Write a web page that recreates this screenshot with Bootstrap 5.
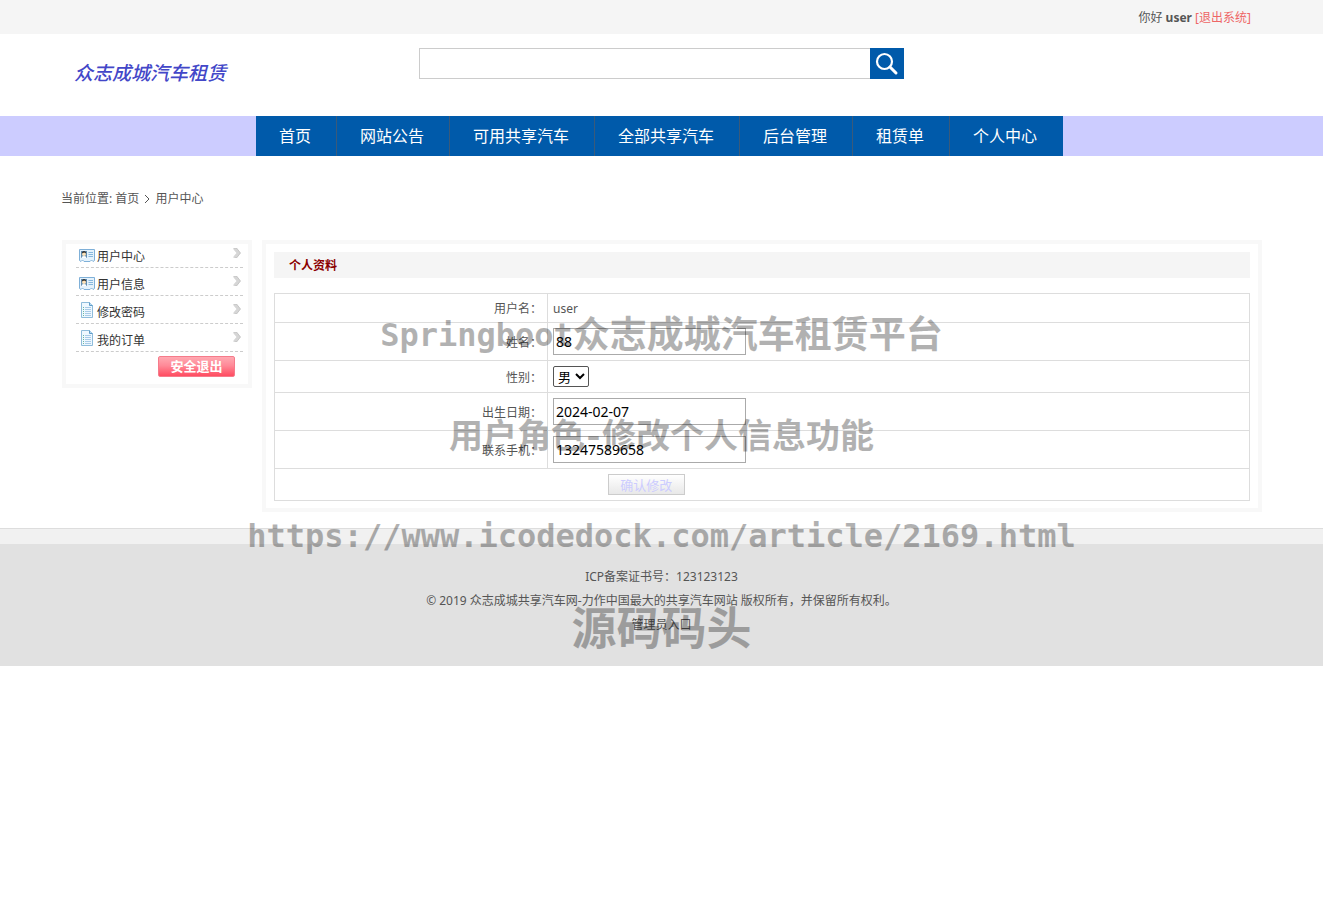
<!DOCTYPE html>
<html lang="zh-CN">
<head>
<meta charset="utf-8">
<meta name="viewport" content="width=device-width, initial-scale=1">
<title>用户中心</title>
<link rel="stylesheet" href="https://cdn.jsdelivr.net/npm/bootstrap@5.3.0/dist/css/bootstrap.min.css">
<style>
  body { font: 12px/18px "Noto Sans", "Noto Sans CJK SC", sans-serif; color: #555; background: #fff; }
  a { color: inherit; text-decoration: none; }
  .page-width { max-width: 1201px; margin: 0 auto; }
  .topbar { height: 34px; background: #f5f5f5; line-height: 36px; }
  .topbar .page-width { padding-right: 11px; }
  .topbar a { color: #e66; }
  .site-head { height: 82px; }
  .brand { width: 344px; padding: 27px 0 0 13px; font: italic 500 19px/22px "Noto Sans CJK SC", sans-serif; color: #4347c8; }
  .search-form { width: 485px; height: 31px; margin: 14px 0 0 14px; }
  .search-form input { border: 1px solid #ccc; border-right: 0; outline: 0; padding: 0 8px; font-size: 14px; min-width: 0; }
  .search-form button { width: 34px; border: 0; padding: 0; background: #005aaa; }
  .mainnav { background: #ccf; }
  .mainnav ul { margin: 0 0 0 195px; }
  .mainnav a { display: block; padding: 0 25px 0 23px; font-size: 16px; line-height: 40px; color: #fff; background: #005aaa; border-right: 1px solid #3a5a7a; }
  .mainnav li:last-child a { border-color: #005aaa; }
  .crumbs { padding-top: 34px; height: 84px; }
  .crumbs svg { margin: 0 1px; vertical-align: -1px; }
  .panel { border: 4px solid #f8f8f8; }
  .side { width: 190px; height: 148px; margin-left: 1px; padding: 0 5px 0 10px; }
  .side li { height: 28px; border-bottom: 1px dashed #ccc; color: #333; }
  .side li:first-child { height: 24px; }
  .side a { display: flex; height: 100%; align-items: flex-end; padding: 0 2px 1px 3px; }
  .side svg { flex: none; }
  .side .glyph { margin: 0 2px 4px 0; }
  .side .arrow { margin: 0 0 8px auto; }
  .side button { width: 77px; height: 21px; margin: 4px 8px 0 0; border: 1px solid #f67b8b; border-radius: 2px; padding: 0; font-size: 13px; font-weight: 700; line-height: 19px; color: #fff; background: linear-gradient(#ffa9b2, #ff8a98 45%, #ff4c61); }
  .profile { margin-left: 10px; padding: 8px 8px 7px; min-width: 0; }
  .profile h1 { height: 26px; margin: 0 0 15px; padding-left: 15px; font-size: 12px; font-weight: 700; line-height: 28px; color: #8b0000; background: #f5f5f5; }
  .info { width: 100%; border-collapse: collapse; table-layout: fixed; }
  .info th, .info td { border: 1px solid #ddd; padding: 5px; font-weight: 400; }
  .info th, .info .plain { padding: 6px 5px 4px; }
  .info th { width: 28%; text-align: right; }
  .info label { display: inline-block; }
  .info input, .info select { display: block; color: #000; font-size: 14px; background: transparent; }
  .info input { width: 193px; height: 27px; padding: 0 2px; border: 1px solid #aaa; outline: 0; }
  .info select { width: 36px; height: 21px; padding: 0; border: 1px solid #555; border-radius: 2px; font-size: 13px; }
  .info button { display: block; width: 77px; height: 21px; margin-left: 34%; border: 1px solid #ccc; padding: 0; font-size: 13px; line-height: 20px; color: #ccf; background: linear-gradient(#fff, #e8e8e8); }
  .site-foot { margin-top: 16px; border-top: 1px solid #ddd; background: #e1e1e1; line-height: 24px; text-align: center; }
  .foot-strip { height: 15px; background: #f1f1f1; }
  .foot-text { padding: 21px 0 29px; }
  .overlay { position: absolute; top: 306px; left: 0; right: 0; text-align: center; font-family: "Noto Sans Mono CJK SC", "Noto Sans CJK SC", sans-serif; font-weight: 700; color: #000; opacity: .3; pointer-events: none; white-space: nowrap; }
  .overlay p { margin: 0; line-height: 52px; height: 98px; }
  .overlay .wm-title { font-size: 37px; height: 102px; }
  .overlay .wm-topic { font-size: 34px; }
  .overlay .wm-link { line-height: 60px; }
  .overlay .wm-brand { font-size: 45px; line-height: 44px; }
  .overlay .mono { font-family: "DejaVu Sans Mono", monospace; font-size: 32px; }
  .overlay span.mono { vertical-align: 2px; line-height: 32px; }
</style>
</head>
<body class="position-relative">
<div class="topbar"><div class="page-width text-end">你好 <b>user</b> <a href="#">[退出系统]</a></div></div>
<header class="page-width site-head d-flex align-items-start">
  <a class="brand" href="#">众志成城汽车租赁</a>
  <form class="search-form d-flex">
    <input class="flex-grow-1" type="text" aria-label="搜索">
    <button type="button" aria-label="搜索"><svg width="34" height="31" viewBox="0 0 34 31" fill="none" stroke="#fff"><circle cx="14.500" cy="13.500" r="7.500" stroke-width="2.200"/><path d="M20 19l6 6" stroke-width="3" stroke-linecap="round"/></svg></button>
  </form>
</header>
<nav class="mainnav"><div class="page-width">
  <ul class="list-unstyled d-flex">
    <li><a href="#">首页</a></li><li><a href="#">网站公告</a></li><li><a href="#">可用共享汽车</a></li><li><a href="#">全部共享汽车</a></li><li><a href="#">后台管理</a></li><li><a href="#">租赁单</a></li><li><a href="#">个人中心</a></li>
  </ul></div></nav>
<svg class="d-none">
  <symbol id="card-icon" viewBox="0 0 16 13"><path d="M.5.5h15v11l-1.500 1-1.500-1.500-1.500 1.500h-6L3.500 11 2 12.500.5 11.500z" fill="#e4f2fc" stroke="#7fb0d8"/><path d="M2 2h6v7H2z" fill="#5f8cb0"/><circle cx="5" cy="5" r="2" fill="#ffe3b8"/><path d="M2.800 4.500q0-2.500 2.200-2.500t2.200 2.500l-2-1z" fill="#332a22"/><path d="M2.500 9q0-2 2.500-2t2.500 2z" fill="#fff"/><path d="M9.500 3.500h4.500M9.500 5.500h4.500M9.500 7.500h4.500" stroke="#87b8de"/></symbol>
  <symbol id="page-icon" viewBox="0 0 16 16"><path d="M2.500.5h8l3 3v12h-11z" fill="#eef8ff" stroke="#8fbcdb"/><path d="M10.500.5v3h3" fill="#b9dcf3" stroke="#5f9cc8"/><path d="M4 5.500h1M4 7.500h1M4 9.500h1M4 11.500h1M4 13.500h1" stroke="#6ab8a0"/><path d="M6 5.500h6M6 7.500h6M6 9.500h6M6 11.500h6M6 13.500h6" stroke="#a9cbe8"/></symbol>
  <symbol id="arrow-icon" viewBox="0 0 8 10"><path d="M.5 0h3L7.500 5l-4 5h-3V8.500L3.500 5l-3-3.500z" fill="#d6d6d6"/><path d="M.5 0h3L7.500 5l-4 5h-1.500" fill="none" stroke="#b8b8b8" stroke-width=".7"/></symbol>
</svg>
<div class="page-width">
  <div class="crumbs">当前位置: <a href="#">首页</a> <svg width="8" height="10" viewBox="0 0 8 10" fill="none" stroke="#555"><path d="M2 1l4 4-4 4"/></svg> 用户中心</div>
  <main class="d-flex align-items-start">
    <aside class="panel side flex-shrink-0">
      <ul class="list-unstyled m-0">
        <li><a href="#"><svg class="glyph" width="16" height="13"><use href="#card-icon"/></svg>用户中心<svg class="arrow" width="8" height="10"><use href="#arrow-icon"/></svg></a></li>
        <li><a href="#"><svg class="glyph" width="16" height="13"><use href="#card-icon"/></svg>用户信息<svg class="arrow" width="8" height="10"><use href="#arrow-icon"/></svg></a></li>
        <li><a href="#"><svg class="glyph" width="16" height="16"><use href="#page-icon"/></svg>修改密码<svg class="arrow" width="8" height="10"><use href="#arrow-icon"/></svg></a></li>
        <li><a href="#"><svg class="glyph" width="16" height="16"><use href="#page-icon"/></svg>我的订单<svg class="arrow" width="8" height="10"><use href="#arrow-icon"/></svg></a></li>
      </ul>
      <button type="button" class="d-block ms-auto">安全退出</button>
    </aside>
    <section class="panel profile flex-grow-1">
      <h1>个人资料</h1>
      <form>
      <table class="info">
        <tr><th scope="row">用户名：</th><td class="plain">user</td></tr>
        <tr><th scope="row"><label for="realname">姓名：</label></th><td><input id="realname" type="text" value="88"></td></tr>
        <tr><th scope="row"><label for="gender">性别：</label></th><td><select id="gender"><option>男</option><option>女</option></select></td></tr>
        <tr><th scope="row"><label for="birthday">出生日期：</label></th><td><input id="birthday" type="text" value="2024-02-07"></td></tr>
        <tr><th scope="row"><label for="phone">联系手机：</label></th><td><input id="phone" type="text" value="13247589658"></td></tr>
        <tr><td colspan="2"><button type="button">确认修改</button></td></tr>
      </table>
      </form>
    </section>
  </main>
</div>
<footer class="site-foot">
  <div class="foot-strip"></div>
  <div class="foot-text">
    <div>ICP备案证书号：123123123</div>
    <div>© 2019 众志成城共享汽车网-力作中国最大的共享汽车网站 版权所有，并保留所有权利。</div>
    <div><a href="#">管理员入口</a></div>
  </div>
</footer>
<div class="overlay">
  <p class="wm-title"><span class="mono">Springboot</span>众志成城汽车租赁平台</p>
  <p class="wm-topic">用户角色-修改个人信息功能</p>
  <p class="mono wm-link">https://www.icodedock.com/article/2169.html</p>
  <p class="wm-brand">源码码头</p>
</div>
<script src="https://cdn.jsdelivr.net/npm/bootstrap@5.3.0/dist/js/bootstrap.bundle.min.js"></script>
</body>
</html>
